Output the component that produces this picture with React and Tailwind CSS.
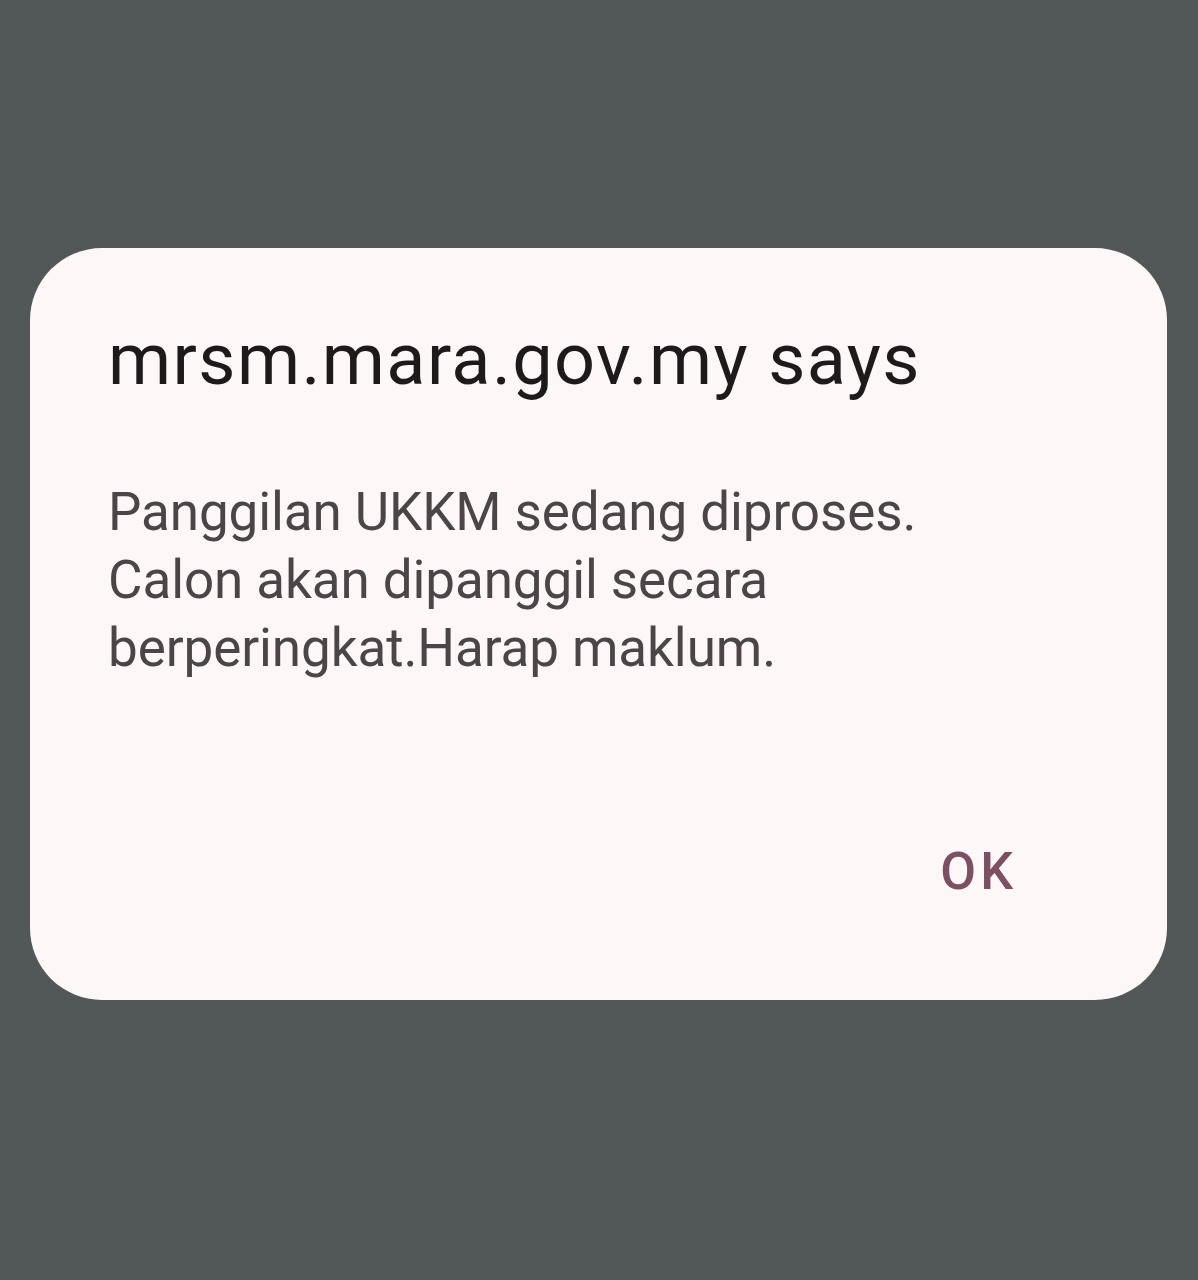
export default function App() {
  return (
    <div className="min-h-[1280px] w-full bg-[#525857] pt-[248px] px-[30px]" style={{ fontFamily: "Roboto, 'Open Sans', sans-serif" }}>
      <div className="flex h-[752px] w-[1137px] flex-col rounded-[72px] bg-[#fdf7f7] pl-[78px] pr-[154px]">
        <h1 className="pt-[72px] text-[72px] leading-[80px] tracking-[1.4px] text-[#1e1a1b]">mrsm.mara.gov.my says</h1>
        <p className="mt-[78px] text-[53px] leading-[68px] tracking-[-0.1px] text-[#4c4548]">
          Panggilan UKKM sedang diproses.
          <br />
          Calon akan dipanggil secara
          <br />
          berperingkat.Harap maklum.
        </p>
        <div className="mt-auto flex justify-end pb-[102px]">
          <button className="-mr-[4px] text-[52px] font-medium leading-none tracking-[4px] text-[#7d4f63]">OK</button>
        </div>
      </div>
    </div>
  );
}
